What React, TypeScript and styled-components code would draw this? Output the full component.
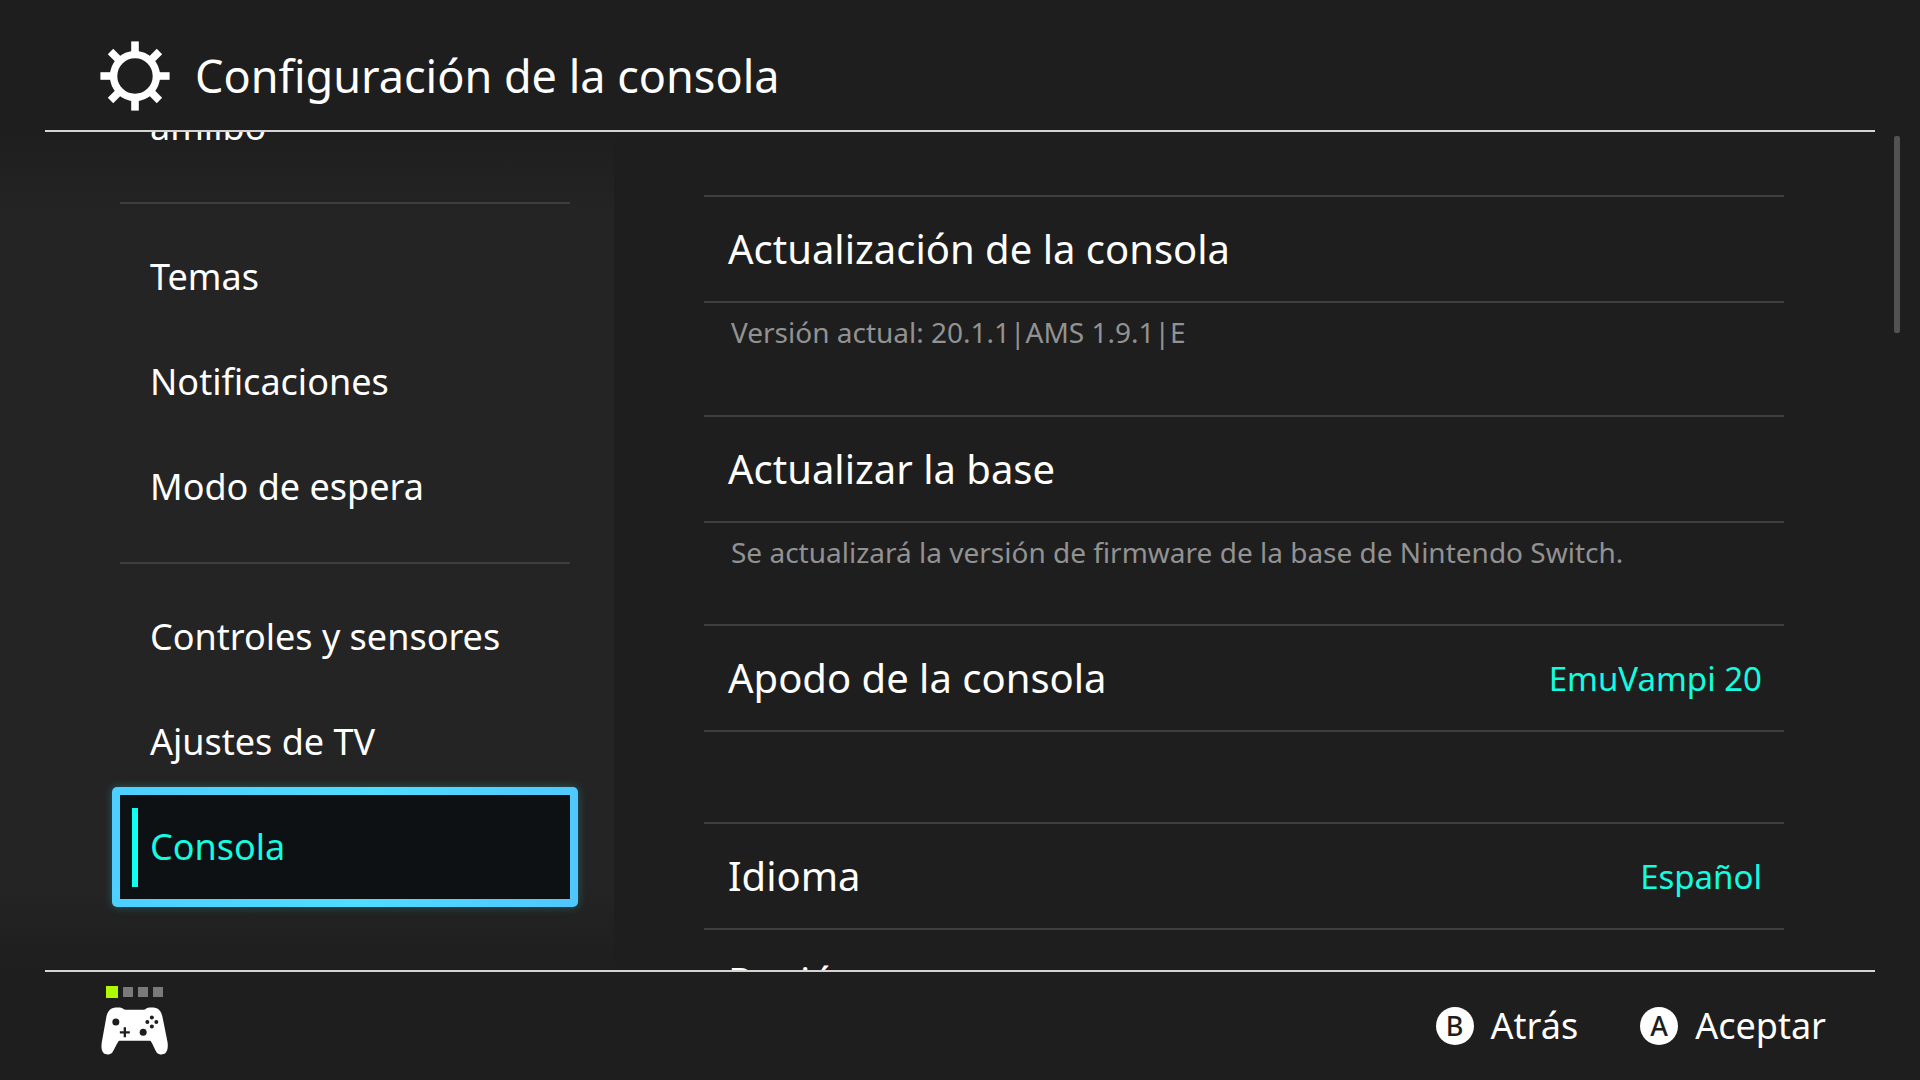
import React, { useState } from "react";
import styled, { createGlobalStyle, css } from "styled-components";

const color = {
  page: "#1e1e1e",
  panel: "#242424",
  text: "#ffffff",
  muted: "#929292",
  rule: "#3e3e3e",
  frame: "#d4d4d4",
  accent: "#14fce0",
  marker: "#10fff0",
  dot: "#7a7a7a",
  dotOn: "#b0fa00",
};

const GlobalStyle = createGlobalStyle`
  *, *::before, *::after { box-sizing: border-box; }
  body {
    margin: 0;
    background: ${color.page};
    color: ${color.text};
    font-family: "Noto Sans", "Open Sans", sans-serif;
  }
  button {
    margin: 0;
    padding: 0;
    border: 0;
    background: none;
    color: inherit;
    font: inherit;
    text-align: left;
    cursor: pointer;
  }
  ul { margin: 0; padding: 0; list-style: none; }
`;

const Screen = styled.div`
  display: grid;
  grid-template-rows: auto minmax(0, 1fr) auto;
  height: 100vh;
  overflow: hidden;
`;

const Header = styled.header`
  display: flex;
  align-items: center;
  gap: 25px;
  min-height: 132px;
  margin: 0 45px;
  padding: 22px 55px 0;
  border-bottom: 2px solid ${color.frame};
`;

const Title = styled.h1`
  margin: 0;
  font-size: 45px;
  line-height: 64px;
  font-weight: 400;
`;

const Body = styled.div`
  display: flex;
  min-height: 0;
  overflow: hidden;
`;

const Sidebar = styled.nav`
  display: flex;
  flex-direction: column;
  justify-content: flex-end;
  flex: 0 0 614px;
  padding: 0 44px 70px 120px;
  background: linear-gradient(
    ${color.page} 0,
    ${color.panel} 80px,
    ${color.panel} calc(100% - 80px),
    ${color.page} 100%
  );
`;

const NavGroup = styled.ul`
  flex: none;

  & + & {
    margin-top: 22px;
    padding-top: 21px;
    border-top: 2px solid ${color.rule};
  }
`;

const NavButton = styled.button<{ $active: boolean }>`
  position: relative;
  isolation: isolate;
  display: flex;
  align-items: center;
  width: 100%;
  height: 105px;
  padding: 0 30px 2px;
  font-size: 36px;
  line-height: 48px;
  outline: none;

  ${({ $active }) =>
    $active &&
    css`
      color: ${color.accent};

      &::before {
        content: "";
        position: absolute;
        inset: -8px -8px -7px;
        z-index: -1;
        border: 8px solid transparent;
        border-radius: 5px;
        background:
          linear-gradient(#0d1113, #0d1113) padding-box,
          linear-gradient(100deg, #4dcfff, #4fdcff 55%, #50c6ff) border-box;
        box-shadow: 0 0 8px rgba(40, 200, 210, 0.35);
      }

      &::after {
        content: "";
        position: absolute;
        top: 13px;
        bottom: 13px;
        left: 12px;
        width: 6px;
        background: ${color.marker};
      }
    `}
`;

const Content = styled.main`
  flex: 1;
  min-width: 0;
  padding: 63px 110px 0 90px;
  overflow: hidden;
`;

const Setting = styled.section<{ $space: number }>`
  margin-bottom: ${({ $space }) => $space}px;
`;

const SettingButton = styled.button`
  display: flex;
  align-items: center;
  justify-content: space-between;
  width: 100%;
  height: 108px;
  padding: 0 22px 0 24px;
  border: solid ${color.rule};
  border-width: 2px 0;
`;

const SettingName = styled.span`
  font-size: 40px;
  line-height: 56px;
`;

const SettingValue = styled.span`
  padding-top: 2px;
  font-size: 33px;
  line-height: 48px;
  color: ${color.accent};
`;

const SettingNote = styled.p`
  margin: 0;
  padding: 9px 27px 0;
  font-size: 28px;
  line-height: 40px;
  color: ${color.muted};
`;

const ScrollTrack = styled.div`
  flex: 0 0 26px;
  padding-top: 4px;
`;

const ScrollThumb = styled.div`
  width: 6px;
  height: 197px;
  border-radius: 2px;
  background: #525252;
`;

const Footer = styled.footer`
  display: flex;
  justify-content: space-between;
  min-height: 110px;
  margin: 0 45px;
  padding: 0 49px 0 56px;
  border-top: 2px solid ${color.frame};
`;

const Player = styled.div`
  display: flex;
  flex-direction: column;
  gap: 9px;
  padding-top: 14px;
`;

const Lights = styled.div`
  display: flex;
  align-items: center;
  gap: 5px;
  padding-left: 5px;
`;

const Light = styled.span<{ $on: boolean }>`
  width: ${({ $on }) => ($on ? 12 : 10)}px;
  height: ${({ $on }) => ($on ? 12 : 10)}px;
  background: ${({ $on }) => ($on ? color.dotOn : color.dot)};
`;

const Hints = styled.div`
  display: flex;
  align-items: center;
  gap: 62px;
`;

const Hint = styled.button`
  display: flex;
  align-items: center;
  gap: 17px;
  font-size: 36px;
  line-height: 48px;
`;

const Key = styled.span`
  display: grid;
  place-items: center;
  width: 38px;
  height: 38px;
  border-radius: 50%;
  background: ${color.text};
  color: ${color.page};
  font-size: 27px;
  font-weight: 500;
  line-height: 38px;
`;

function GearIcon() {
  return (
    <svg width="70" height="70" viewBox="-35 -35 70 70" aria-hidden="true">
      <circle r="21.4" fill="none" stroke="#fff" strokeWidth="7.4" />
      {[0, 45, 90, 135, 180, 225, 270, 315].map((angle) => (
        <rect
          key={angle}
          x="-3.8"
          y="-34.6"
          width="7.6"
          height="12"
          fill="#fff"
          transform={`rotate(${angle})`}
        />
      ))}
    </svg>
  );
}

function ControllerIcon() {
  return (
    <svg width="67" height="48" viewBox="0 0 200 144" aria-hidden="true">
      <path
        fill="#fff"
        d="M36 3C45 1 55 1 62 3C66 5 68 8 73 8H128C133 8 134 5 138 3C146 1 156 1 164 3C176 7 181 16 184 30L199 105C201 118 200 130 193 138C186 144 174 144 167 137C160 128 157 114 149 103C148 101 146 101 144 101H57C55 101 53 101 52 103C44 114 40 128 33 137C26 144 14 144 7 138C0 130 0 118 2 105L15 33C18 17 24 7 36 3Z"
      />
      <g fill={color.page}>
        <circle cx="44" cy="45" r="10.5" />
        <circle cx="126" cy="76" r="10.5" />
        <path d="M67.5 61h7v11.500h11.500v7h-11.500v11.500h-7v-11.500h-11.500v-7h11.500z" />
        <circle cx="152" cy="31.500" r="6" />
        <circle cx="152" cy="58.500" r="6" />
        <circle cx="138.500" cy="45" r="6" />
        <circle cx="165.500" cy="45" r="6" />
      </g>
    </svg>
  );
}

const navGroups = [
  ["amiibo"],
  ["Temas", "Notificaciones", "Modo de espera"],
  ["Controles y sensores", "Ajustes de TV", "Consola"],
];

const settings = [
  {
    name: "Actualización de la consola",
    note: "Versión actual: 20.1.1|AMS 1.9.1|E",
    space: 63,
  },
  {
    name: "Actualizar la base",
    note: "Se actualizará la versión de firmware de la base de Nintendo Switch.",
    space: 52,
  },
  { name: "Apodo de la consola", value: "EmuVampi 20", space: 90 },
  { name: "Idioma", value: "Español", space: -2 },
  { name: "Región", space: 0 },
];

export default function App() {
  const [active, setActive] = useState("Consola");

  return (
    <Screen>
      <GlobalStyle />
      <Header>
        <GearIcon />
        <Title>Configuración de la consola</Title>
      </Header>

      <Body>
        <Sidebar>
          {navGroups.map((group) => (
            <NavGroup key={group[0]}>
              {group.map((label) => (
                <li key={label}>
                  <NavButton
                    type="button"
                    $active={label === active}
                    aria-current={label === active ? "page" : undefined}
                    onClick={() => setActive(label)}
                  >
                    {label}
                  </NavButton>
                </li>
              ))}
            </NavGroup>
          ))}
        </Sidebar>

        <Content>
          {settings.map(({ name, value, note, space }) => (
            <Setting key={name} $space={space}>
              <SettingButton type="button">
                <SettingName>{name}</SettingName>
                {value && <SettingValue>{value}</SettingValue>}
              </SettingButton>
              {note && <SettingNote>{note}</SettingNote>}
            </Setting>
          ))}
        </Content>

        <ScrollTrack>
          <ScrollThumb />
        </ScrollTrack>
      </Body>

      <Footer>
        <Player>
          <Lights>
            {[true, false, false, false].map((on, index) => (
              <Light key={index} $on={on} />
            ))}
          </Lights>
          <ControllerIcon />
        </Player>
        <Hints>
          <Hint type="button">
            <Key>B</Key>
            Atrás
          </Hint>
          <Hint type="button">
            <Key>A</Key>
            Aceptar
          </Hint>
        </Hints>
      </Footer>
    </Screen>
  );
}
